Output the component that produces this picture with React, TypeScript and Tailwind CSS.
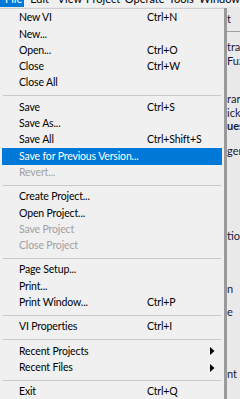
import clsx from "clsx";

type Entry =
    | { kind: "sep" }
    | { kind: "item"; label: string; shortcut?: string; disabled?: boolean; active?: boolean; submenu?: boolean };

const entries: Entry[] = [
    { kind: "item", label: "New VI", shortcut: "Ctrl+N" },
    { kind: "item", label: "New..." },
    { kind: "item", label: "Open...", shortcut: "Ctrl+O" },
    { kind: "item", label: "Close", shortcut: "Ctrl+W" },
    { kind: "item", label: "Close All" },
    { kind: "sep" },
    { kind: "item", label: "Save", shortcut: "Ctrl+S" },
    { kind: "item", label: "Save As..." },
    { kind: "item", label: "Save All", shortcut: "Ctrl+Shift+S" },
    { kind: "item", label: "Save for Previous Version...", active: true },
    { kind: "item", label: "Revert...", disabled: true },
    { kind: "sep" },
    { kind: "item", label: "Create Project..." },
    { kind: "item", label: "Open Project..." },
    { kind: "item", label: "Save Project", disabled: true },
    { kind: "item", label: "Close Project", disabled: true },
    { kind: "sep" },
    { kind: "item", label: "Page Setup..." },
    { kind: "item", label: "Print..." },
    { kind: "item", label: "Print Window...", shortcut: "Ctrl+P" },
    { kind: "sep" },
    { kind: "item", label: "VI Properties", shortcut: "Ctrl+I" },
    { kind: "sep" },
    { kind: "item", label: "Recent Projects", submenu: true },
    { kind: "item", label: "Recent Files", submenu: true },
    { kind: "sep" },
    { kind: "item", label: "Exit", shortcut: "Ctrl+Q" },
];

const menuBar = [
    { name: "Edit", cls: "w-[33px] pl-[6px]" },
    { name: "View", cls: "w-[32px] pl-[4px]" },
    { name: "Project", cls: "w-[44px] pl-[4px]" },
    { name: "Operate", cls: "w-[50px] pl-[4px]" },
    { name: "Tools", cls: "w-[34px] pl-[4px]" },
    { name: "Window", cls: "pl-[4px]" },
];

// bits of the VI window that peek out right of the menu
const behind = [
    { text: "t", gap: "mt-[5px]" },
    { text: "trai", gap: "mt-[15px]" },
    { text: "Fuz", gap: "mt-[1px]" },
    { text: "rar", gap: "mt-[25px]" },
    { text: "ick", gap: "mt-[1px]" },
    { text: "ues", gap: "mt-0", bold: true },
    { text: "gen", gap: "mt-[12px]" },
    { text: "tion", gap: "mt-[72px]" },
    { text: "n", gap: "mt-[40px]" },
    { text: "e", gap: "mt-[10px]" },
    { text: "nt", gap: "mt-[49px]" },
];

const Arrow = () => (
    <svg width="5" height="8" viewBox="0 0 5 8" className="shrink-0">
        <path d="M0 0 L4.5 4 L0 8 Z" fill="#000" />
    </svg>
);

export default function App() {
    return (
        <div className="relative h-[399px] w-[240px] overflow-hidden bg-[#f0f0f0] font-['Lato','Open_Sans',sans-serif] text-[11px] text-black">
            {/* application menu bar, mostly cut off at the top */}
            <div className="-mt-[10px] flex h-[17px] items-center bg-[#f0f0f0] whitespace-nowrap">
                <span className="flex h-full w-[27px] items-center bg-[#0078d7] pt-[2px] pl-[5px] text-white">File</span>
                {menuBar.map(({ name, cls }) => (
                    <span key={name} className={clsx("pt-[2px]", cls)}>
                        {name}
                    </span>
                ))}
            </div>

            {/* window content behind the menu */}
            <div className="flex h-full flex-col bg-[#e9e9e9] pl-[227px] leading-[13px]">
                {behind.map(({ text, gap, bold }, i) => (
                    <span key={i} className={clsx("text-[#1a1a3a]", gap, bold && "font-bold")}>
                        {text}
                    </span>
                ))}
            </div>
            <div className="absolute top-[31px] left-[226px] h-px w-[14px] bg-[#a0a0a0]" />

            {/* File dropdown */}
            <div className="absolute top-[8px] left-0 flex">
                <div className="flex w-[224px] flex-col border-t border-[#d0d0d0] bg-[#f0f0f0] px-[2px] pt-px pb-[4px] text-[10.5px] tracking-[-0.15px]">
                    {entries.map((e, i) =>
                        e.kind === "sep" ? (
                            <div key={i} className="flex h-[8px] flex-col px-px pt-[4px]">
                                <div className="h-px bg-[#c8c8c8]" />
                            </div>
                        ) : (
                            <div
                                key={i}
                                className={clsx(
                                    "flex h-[16.3px] items-center whitespace-nowrap",
                                    e.active && "bg-[#0078d7] text-white",
                                    e.disabled && "text-[#a0a0a0]"
                                )}
                            >
                                <span className="w-[145px] pl-[17px]">{e.label}</span>
                                <span className="flex-1">{e.shortcut}</span>
                                {e.submenu && (
                                    <span className="pr-[7px]">
                                        <Arrow />
                                    </span>
                                )}
                            </div>
                        )
                    )}
                </div>
                <div className="w-[3px] bg-[#9a9a9a]" />
            </div>
        </div>
    );
}
